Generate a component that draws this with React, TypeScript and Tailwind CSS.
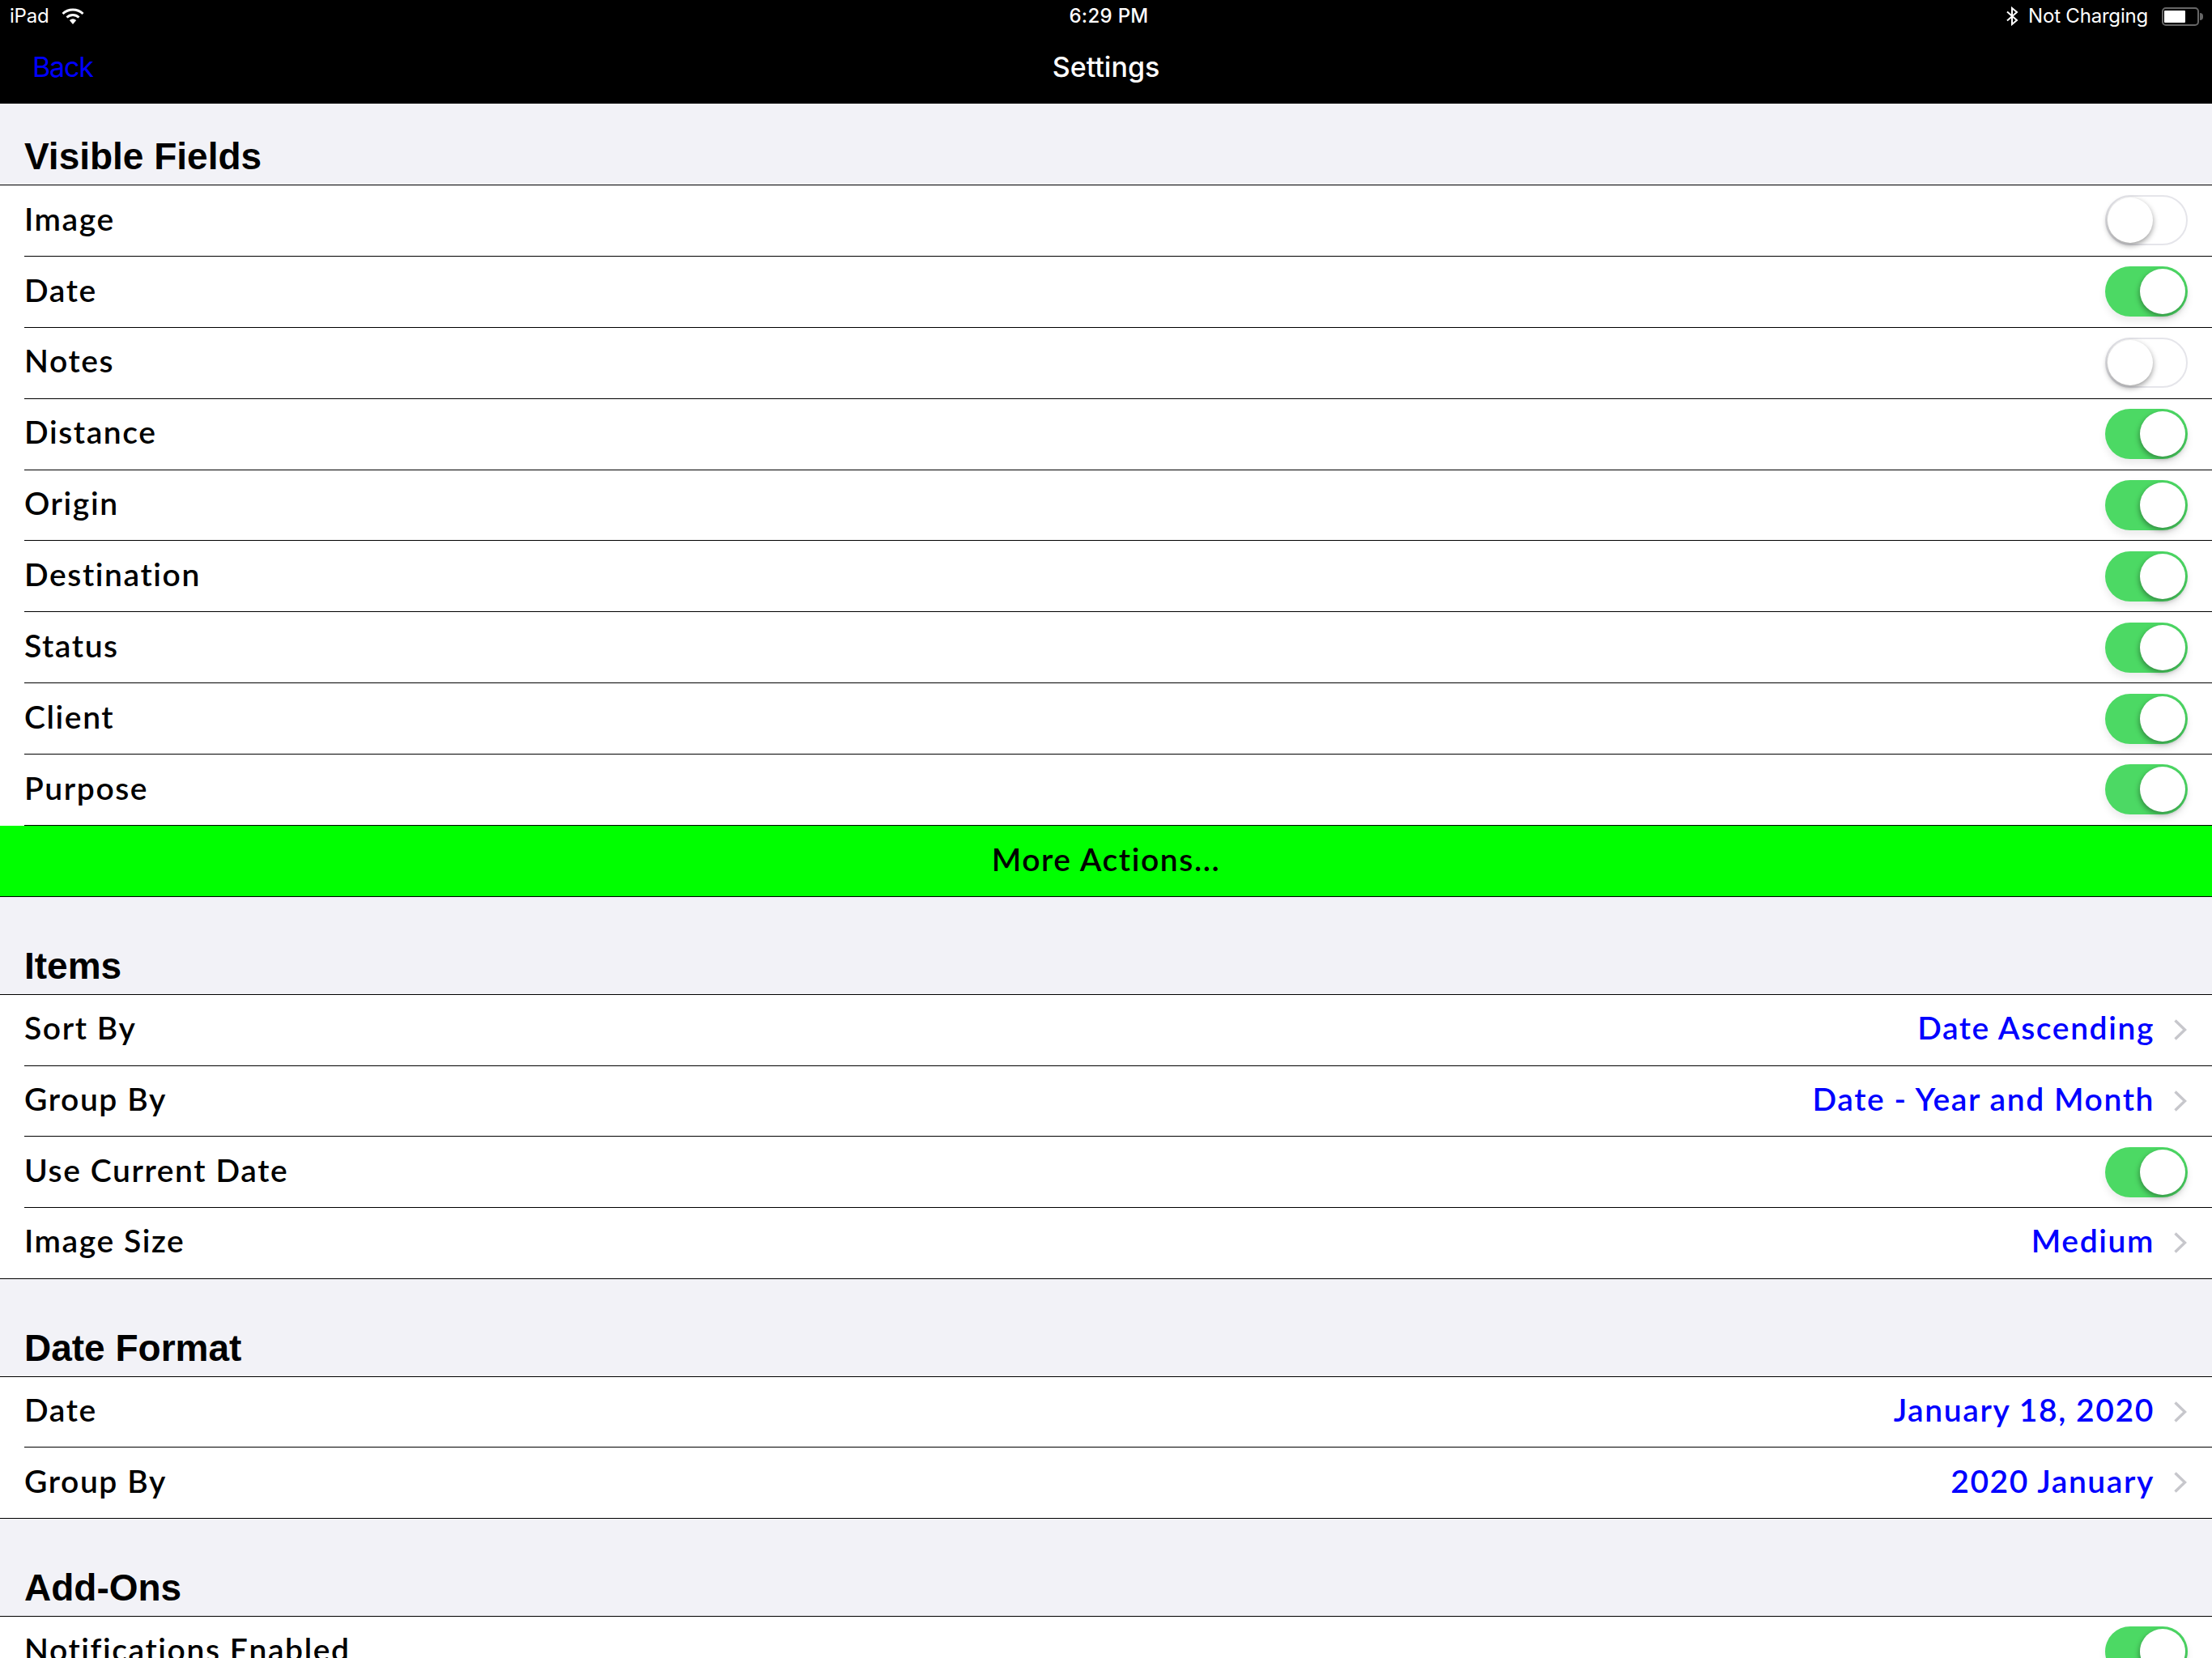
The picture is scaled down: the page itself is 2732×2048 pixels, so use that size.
import { Fragment } from 'react';

type Row = { label: string; on?: boolean; value?: string };

const sections: { title: string; head: string; rowH: string; rows: Row[]; action?: string }[] = [
  {
    title: 'Visible Fields',
    head: 'h-[101px]',
    rowH: 'h-[87.89px]',
    rows: [
      { label: 'Image', on: false },
      { label: 'Date', on: true },
      { label: 'Notes', on: false },
      { label: 'Distance', on: true },
      { label: 'Origin', on: true },
      { label: 'Destination', on: true },
      { label: 'Status', on: true },
      { label: 'Client', on: true },
      { label: 'Purpose', on: true },
    ],
    action: 'More Actions...',
  },
  {
    title: 'Items',
    head: 'h-[121px]',
    rowH: 'h-[87.67px]',
    rows: [
      { label: 'Sort By', value: 'Date Ascending' },
      { label: 'Group By', value: 'Date - Year and Month' },
      { label: 'Use Current Date', on: true },
      { label: 'Image Size', value: 'Medium' },
    ],
  },
  {
    title: 'Date Format',
    head: 'h-[121px]',
    rowH: 'h-[87.67px]',
    rows: [
      { label: 'Date', value: 'January 18, 2020' },
      { label: 'Group By', value: '2020 January' },
    ],
  },
  {
    title: 'Add-Ons',
    head: 'h-[121px]',
    rowH: 'h-[87.67px]',
    rows: [{ label: 'Notifications Enabled', on: true }],
  },
];

const cellText = "pb-[5px] font-['Lato',sans-serif] text-[39px] font-semibold tracking-[1.6px]";

function Toggle({ on }: { on: boolean }) {
  if (on) {
    return (
      <div className="relative h-[62px] w-[102px] rounded-full bg-[#4cd964] shadow-[0_6px_10px_rgba(0,0,0,0.08)]">
        <div className="absolute right-[3px] top-[3px] h-[56px] w-[56px] rounded-full bg-white shadow-[-1px_3px_6px_rgba(0,0,0,0.35)]" />
      </div>
    );
  }
  return (
    <div className="relative h-[62px] w-[102px] rounded-full border-2 border-[#e5e5ea] bg-white">
      <div className="absolute left-[1px] top-[1px] h-[56px] w-[56px] rounded-full bg-white shadow-[0_3px_7px_rgba(0,0,0,0.4)]" />
    </div>
  );
}

function Chevron() {
  return (
    <svg width="18" height="28" viewBox="0 0 18 28" fill="none">
      <path d="M2.500 2.500 L14.500 14 L2.500 25.500" stroke="#c7c7cc" strokeWidth="3.400" />
    </svg>
  );
}

function Wifi() {
  return (
    <svg width="28" height="20" viewBox="0 0 28 20" fill="none" stroke="white" strokeWidth="3">
      <path d="M1.500 7 A18 18 0 0 1 26.500 7" />
      <path d="M6.500 11.500 A11 11 0 0 1 21.500 11.500" />
      <path d="M9.800 15 A6.500 6.500 0 0 1 18.200 15 L14 20 Z" fill="white" stroke="none" />
    </svg>
  );
}

function Battery() {
  return (
    <div className="flex items-center gap-px">
      <div className="flex h-[23px] w-[46px] items-center rounded-[5px] border-2 border-[#666] pl-px">
        <div className="h-[15px] w-[26px] rounded-[1px] bg-white" />
      </div>
      <div className="h-[9px] w-[4px] rounded-r-sm bg-[#666]" />
    </div>
  );
}

export default function App() {
  return (
    <div className="h-[2048px] w-[2732px] overflow-hidden bg-[#f2f2f7] font-['Liberation_Sans',sans-serif]">
      <div className="h-[128px] bg-black font-['Inter',sans-serif] text-white">
        <div className="flex h-[40px] items-center pl-[12px] pr-[11px] text-[24px] tracking-[-0.2px]">
          <div className="flex flex-1 items-center gap-[15px]">
            <span>iPad</span>
            <Wifi />
          </div>
          <span className="ml-[6px] font-medium tracking-[0.3px]">6:29 PM</span>
          <div className="flex flex-1 items-center justify-end">
            <svg width="16" height="24" viewBox="0 0 16 24" fill="none" stroke="white" strokeWidth="2">
              <path d="M2 6.500 L14 17 L8 22 V2 L14 7 L2 17.500" />
            </svg>
            <span className="ml-[12px] mr-[17px]">Not Charging</span>
            <Battery />
          </div>
        </div>
        <div className="relative flex h-[88px] items-center justify-center pb-[3px] text-[34px]">
          <span className="absolute left-[40px] tracking-[-1.2px] text-[#0000ff]">Back</span>
          <span className="font-medium">Settings</span>
        </div>
      </div>

      {sections.map((s) => (
        <Fragment key={s.title}>
          <div className={`flex items-end border-b border-black px-[30px] pb-[10px] text-[46px] font-bold leading-[50px] text-black ${s.head}`}>
            {s.title}
          </div>
          <div className="bg-white">
            {s.rows.map((r, j) => {
              const last = j === s.rows.length - 1;
              return (
                <div key={r.label} className={`${s.rowH} ${last && !s.action ? 'border-b border-black' : 'pl-[30px]'}`}>
                  <div
                    className={`flex h-full items-center justify-between pr-[30px] ${
                      last && !s.action ? 'pl-[30px]' : 'border-b border-black'
                    }`}
                  >
                    <span className={`${cellText} text-black`}>{r.label}</span>
                    {r.value !== undefined ? (
                      <div className="flex items-center gap-[23px]">
                        <span className={`${cellText} text-[#0000ff]`}>{r.value}</span>
                        <Chevron />
                      </div>
                    ) : (
                      <Toggle on={!!r.on} />
                    )}
                  </div>
                </div>
              );
            })}
          </div>
          {s.action && (
            <div className="flex h-[88px] items-center justify-center border-b border-black bg-[#00ff00]">
              <span className={`${cellText} text-black`}>{s.action}</span>
            </div>
          )}
        </Fragment>
      ))}
    </div>
  );
}
